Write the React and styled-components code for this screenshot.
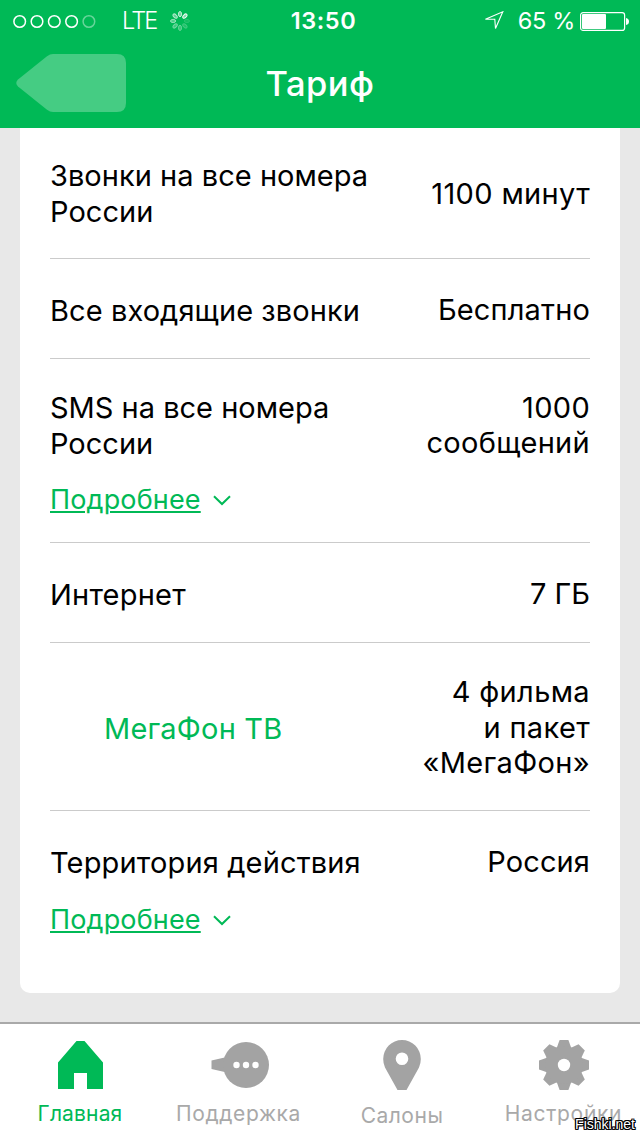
import React from 'react';
import styled, { createGlobalStyle } from 'styled-components';

const GREEN = '#00b956';
const GREY = '#a3a3a3';

const GlobalStyle = createGlobalStyle`
  * {
    box-sizing: border-box;
  }
  body {
    margin: 0;
    font-family: Inter, 'Noto Sans', sans-serif;
    color: #000;
    background: #e8e8e8;
  }
`;

const Screen = styled.div`
  position: relative;
  display: flex;
  flex-direction: column;
  width: 640px;
  height: 1136px;
  overflow: hidden;
`;

const Header = styled.header`
  flex: none;
  height: 128px;
  color: #fff;
  background: ${GREEN};
`;

const StatusBar = styled.div`
  display: grid;
  grid-template-columns: 1fr auto 1fr;
  align-items: center;
  height: 40px;
  padding: 0 11px 0 12px;
  line-height: 40px;
`;

const StatusGroup = styled.div`
  display: flex;
  align-items: center;
  justify-content: ${props => (props.$end ? 'flex-end' : 'flex-start')};
`;

const Carrier = styled.span`
  width: 48px;
  margin-left: 26px;
  padding-top: 1px;
  font-size: 23.5px;
  font-weight: 300;
  letter-spacing: -1.8px;
`;

const Clock = styled.span`
  padding: 1px 0 0 6px;
  font-size: 23.5px;
  font-weight: 600;
  letter-spacing: .6px;
`;

const Percent = styled.span`
  margin: 0 5px 0 14px;
  padding-top: 1px;
  font-size: 23.5px;
  letter-spacing: -.3px;
`;

const NavBar = styled.div`
  display: grid;
  grid-template-columns: 1fr auto 1fr;
  align-items: center;
  height: 88px;
  padding: 0 16px;
`;

const BackButton = styled.button`
  display: flex;
  width: 110px;
  height: 58px;
  margin-top: -2px;
  padding: 0;
  border: 0;
  background: none;
`;

const Title = styled.h1`
  margin: 0;
  font-size: 34.5px;
  font-weight: 500;
  line-height: 88px;
  letter-spacing: .5px;
`;

const Content = styled.main`
  flex: 1;
  padding: 0 20px;
`;

const Card = styled.section`
  height: 865px;
  padding: 0 30px;
  border-radius: 0 0 10px 10px;
  background: #fff;
`;

const Row = styled.div`
  display: flex;
  justify-content: space-between;
  height: ${props => props.$height}px;
  border-bottom: 1px solid #cbcbcb;
  &:last-child {
    border-bottom: 0;
  }
`;

const RowMain = styled.div`
  padding-top: ${props => props.$top}px;
  padding-left: ${props => (props.$indent ? 54 : 0)}px;
`;

const Label = styled.div`
  font-size: 29px;
  line-height: 36px;
  letter-spacing: ${props => props.$spacing || 0}px;
  white-space: pre-line;
  color: ${props => (props.$accent ? GREEN : '#000')};
`;

const Value = styled(Label)`
  padding-top: ${props => props.$top}px;
  line-height: 35.5px;
  text-align: right;
`;

const More = styled.a`
  display: flex;
  align-items: center;
  gap: 12px;
  margin-top: ${props => props.$gap}px;
  color: ${GREEN};
  font-size: 27px;
  line-height: 36px;
`;

const MoreText = styled.span`
  letter-spacing: .15px;
  text-decoration: underline;
  text-decoration-thickness: 2px;
  text-underline-offset: 2px;
`;

const TabBar = styled.nav`
  display: grid;
  grid-template-columns: 160px 157px 170px 153px;
  flex: none;
  height: 114px;
  border-top: 2px solid #a9a9a9;
  background: #fff;
`;

const Tab = styled.div`
  display: flex;
  flex-direction: column;
  align-items: center;
  padding-top: 14px;
  color: ${props => (props.$active ? GREEN : '#a9a9a9')};
`;

const TabLabel = styled.span`
  margin-top: ${props => (props.$low ? 12 : 10)}px;
  font-size: 21px;
  line-height: 28px;
  letter-spacing: ${props => props.$spacing || 0}px;
`;

const Watermark = styled.span`
  position: absolute;
  right: 5px;
  bottom: 4px;
  color: #fff;
  font: 14px/16px 'Liberation Sans', sans-serif;
  text-shadow: -1px -1px #000, 0 -1px #000, 1px -1px #000, -1px 0 #000,
    1px 0 #000, -1px 1px #000, 0 1px #000, 1px 1px #000;
`;

const Signal = () => (
  <svg width="84" height="16" viewBox="0 0 84 16" fill="none" stroke="#fff" strokeWidth="1.5">
    {[0, 1, 2, 3, 4].map(i => (
      <circle key={i} cx={7.7 + i * 17.3} cy="8.5" r="5.8" opacity={i === 4 ? 0.4 : 1} />
    ))}
  </svg>
);

const spokes = [0.8, 0.95, 0.15, 0.25, 0.4, 0.45, 0.6, 0.7];

const Spinner = () => (
  <svg width="20" height="20" viewBox="0 0 20 20" fill="none" stroke="#fff">
    {spokes.map((opacity, i) => (
      <ellipse
        key={i}
        cx="10"
        cy="3.1"
        rx="1.5"
        ry="2.6"
        fill="#fff"
        fillOpacity=".5"
        opacity={opacity}
        transform={`rotate(${i * 45} 10 10)`}
      />
    ))}
  </svg>
);

const LocationArrow = () => (
  <svg width="20" height="20" viewBox="0 0 20 20" fill="none" stroke="#fff" strokeWidth="1.1">
    <path d="M1.400 8.300 18.800 .8 11.500 17.500 10.800 8.300Z" />
  </svg>
);

const Battery = () => (
  <svg width="49" height="20" viewBox="0 0 49 20">
    <rect x=".6" y="1.6" width="44" height="17.8" rx="2.5" fill="none" stroke="#fff" strokeWidth="1.2" />
    <rect x="2" y="3" width="24" height="15" rx="1" fill="#fff" />
    <path d="M46 7q3 .5 3 3.500t-3 3.500Z" fill="#fff" />
  </svg>
);

const BackShape = () => (
  <svg width="110" height="58" viewBox="0 0 110 58">
    <path
      d="M37 0H101Q110 0 110 9V49Q110 58 101 58H37Q34 58 31 55.800L2 32.500Q-1.500 29 2 25.500L31 2.200Q34 0 37 0Z"
      fill="#fff"
      fillOpacity=".27"
    />
  </svg>
);

const Chevron = () => (
  <svg width="18" height="11" viewBox="0 0 18 11" fill="none" stroke={GREEN} strokeWidth="2">
    <path d="M1 1.200 9 9 17 1.200" />
  </svg>
);

const HomeIcon = () => (
  <svg width="60" height="52" viewBox="0 0 60 52">
    <path d="M26.500 3H34.500L53 24.500V51H37V35H24V51H8V24.500Z" fill={GREEN} />
  </svg>
);

const SupportIcon = () => (
  <svg width="60" height="52" viewBox="0 0 60 52">
    <path d="M2.500 22.500 20 18.500V35L2.500 31Z" fill={GREY} />
    <circle cx="37" cy="27" r="23" fill={GREY} />
    <g fill="#fff">
      <circle cx="27.500" cy="27" r="3.200" />
      <circle cx="37" cy="27" r="3.200" />
      <circle cx="46.500" cy="27" r="3.200" />
    </g>
  </svg>
);

const PinIcon = () => (
  <svg width="60" height="52" viewBox="0 0 60 52">
    <path
      fillRule="evenodd"
      d="M25.500 52 13 29.500Q11.200 25.500 11.200 21A18.800 19 0 0 1 48.800 21Q48.800 25.500 47 29.500L34.500 52ZM30 14.500A6.300 6.300 0 1 0 30 27.100 6.300 6.300 0 1 0 30 14.500Z"
      fill={GREY}
    />
  </svg>
);

const teeth = [0, 45, 90, 135, 180, 225, 270, 315];

const GearIcon = () => (
  <svg width="60" height="52" viewBox="0 0 60 52">
    <g fill={GREY}>
      {teeth.map(angle => (
        <path key={angle} d="M22 12 25.600 2H34.400L38 12Z" transform={`rotate(${angle} 30 27)`} />
      ))}
      <circle cx="30" cy="27" r="19" />
    </g>
    <circle cx="30" cy="27" r="6.200" fill="#fff" />
  </svg>
);

const MoreLink = ({ gap }) => (
  <More $gap={gap}>
    <MoreText>Подробнее</MoreText>
    <Chevron />
  </More>
);

const rows = [
  { height: 131, top: 30, label: 'Звонки на все номера\nРоссии', spacing: 0.03, valueTop: 48, value: '1100 минут', valueSpacing: 0.35 },
  { height: 100, top: 34, label: 'Все входящие звонки', spacing: 0.08, valueTop: 33, value: 'Бесплатно', valueSpacing: 0.15 },
  { height: 184, top: 31, label: 'SMS на все номера\nРоссии', valueTop: 30.6, value: '1000\nсообщений', valueSpacing: 0.3, moreGap: 20 },
  { height: 100, top: 34, label: 'Интернет', spacing: 0.2, valueTop: 33, value: '7 ГБ' },
  { height: 168, top: 68, label: 'МегаФон ТВ', spacing: 0.2, accent: true, valueTop: 31, value: '4 фильма\nи пакет\n«МегаФон»', valueSpacing: 0.35 },
  { height: 182, top: 34, label: 'Территория действия', spacing: 0.15, valueTop: 33, value: 'Россия', valueSpacing: 0.1, moreGap: 21 },
];

const tabs = [
  { label: 'Главная', Icon: HomeIcon, active: true, spacing: 0.15 },
  { label: 'Поддержка', Icon: SupportIcon, spacing: 0.6 },
  { label: 'Салоны', Icon: PinIcon, low: true, spacing: 0.5 },
  { label: 'Настройки', Icon: GearIcon, spacing: 0.7 },
];

const App = () => (
  <Screen>
    <GlobalStyle />
    <Header>
      <StatusBar>
        <StatusGroup>
          <Signal />
          <Carrier>LTE</Carrier>
          <Spinner />
        </StatusGroup>
        <Clock>13:50</Clock>
        <StatusGroup $end>
          <LocationArrow />
          <Percent>65 %</Percent>
          <Battery />
        </StatusGroup>
      </StatusBar>
      <NavBar>
        <BackButton aria-label="Назад"><BackShape /></BackButton>
        <Title>Тариф</Title>
      </NavBar>
    </Header>
    <Content>
      <Card>
        {rows.map(row => (
          <Row key={row.label} $height={row.height}>
            <RowMain $top={row.top} $indent={row.accent}>
              <Label $accent={row.accent} $spacing={row.spacing}>{row.label}</Label>
              {row.moreGap && <MoreLink gap={row.moreGap} />}
            </RowMain>
            <Value $top={row.valueTop} $spacing={row.valueSpacing}>{row.value}</Value>
          </Row>
        ))}
      </Card>
    </Content>
    <TabBar>
      {tabs.map(({ label, Icon, active, low, spacing }) => (
        <Tab key={label} $active={active}>
          <Icon />
          <TabLabel $low={low} $spacing={spacing}>{label}</TabLabel>
        </Tab>
      ))}
    </TabBar>
    <Watermark>Fishki.net</Watermark>
  </Screen>
);

export default App;
